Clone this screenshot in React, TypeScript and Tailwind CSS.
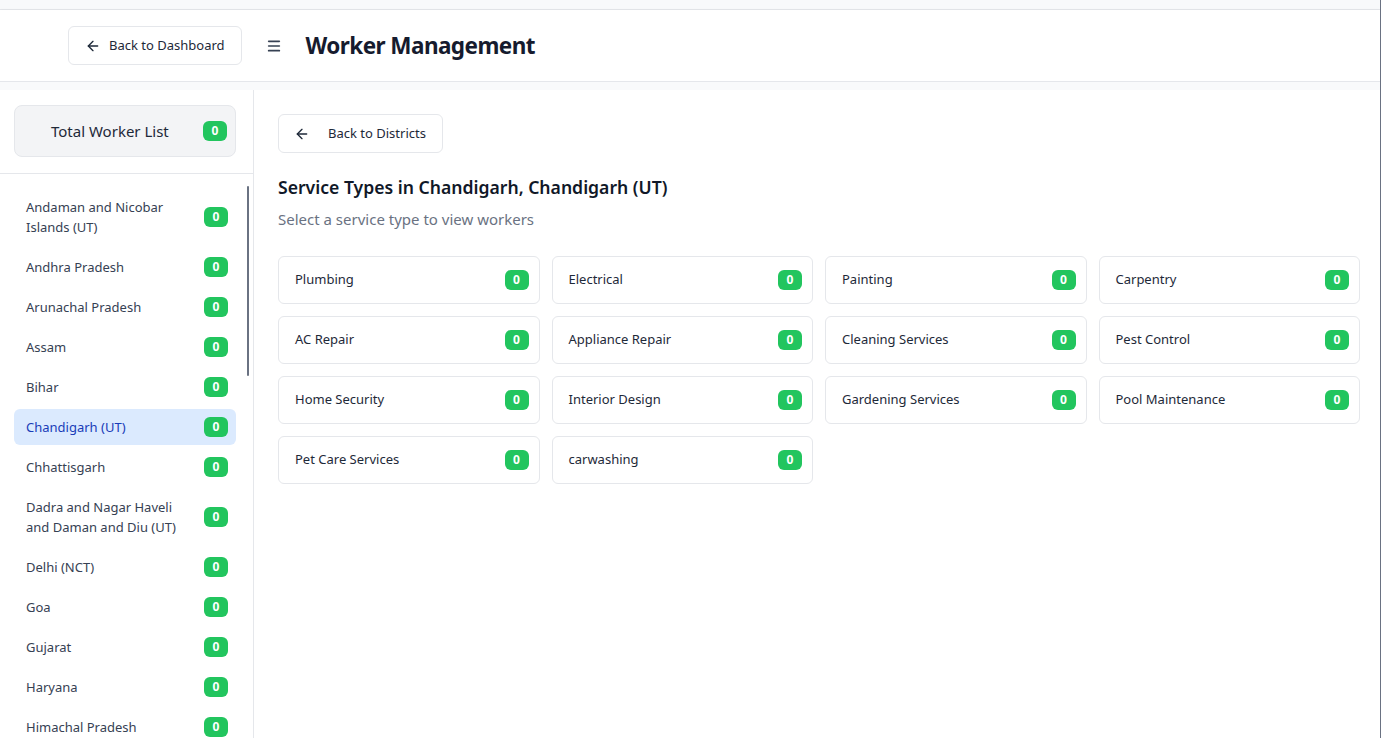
import React from 'react';
import { ArrowLeft, Menu } from 'lucide-react';

const states: { name: string; count: number }[] = [
  { name: 'Andaman and Nicobar Islands (UT)', count: 0 },
  { name: 'Andhra Pradesh', count: 0 },
  { name: 'Arunachal Pradesh', count: 0 },
  { name: 'Assam', count: 0 },
  { name: 'Bihar', count: 0 },
  { name: 'Chandigarh (UT)', count: 0 },
  { name: 'Chhattisgarh', count: 0 },
  { name: 'Dadra and Nagar Haveli and Daman and Diu (UT)', count: 0 },
  { name: 'Delhi (NCT)', count: 0 },
  { name: 'Goa', count: 0 },
  { name: 'Gujarat', count: 0 },
  { name: 'Haryana', count: 0 },
  { name: 'Himachal Pradesh', count: 0 },
];

const services = [
  'Plumbing',
  'Electrical',
  'Painting',
  'Carpentry',
  'AC Repair',
  'Appliance Repair',
  'Cleaning Services',
  'Pest Control',
  'Home Security',
  'Interior Design',
  'Gardening Services',
  'Pool Maintenance',
  'Pet Care Services',
  'carwashing',
];

function CountBadge({ value }: { value: number }) {
  return (
    <span className="inline-flex items-center justify-center h-5 min-w-6 px-2 rounded-md bg-[#22c55e] text-white text-xs font-bold">
      {value}
    </span>
  );
}

export default function App() {
  const selected = 'Chandigarh (UT)';

  return (
    <div
      className="h-[738px] overflow-hidden bg-white border-r border-gray-500 flex flex-col text-gray-800"
      style={{ fontFamily: '"Noto Sans", "Open Sans", sans-serif' }}
    >
      <div className="h-[10px] bg-[#f8f9fb] border-b border-gray-200 shrink-0" />

      <header className="h-[72px] shrink-0 bg-white border-b border-gray-200 shadow-sm flex items-center pl-[68px] gap-6">
        <button className="h-[39px] px-4 flex items-center gap-2 rounded-md border border-gray-200 bg-white text-[13px] text-gray-800">
          <ArrowLeft className="w-4 h-4" strokeWidth={2} />
          Back to Dashboard
        </button>
        <div className="flex items-center gap-6">
          <Menu className="w-4 h-4 text-gray-700" strokeWidth={2.5} />
          <h1 className="text-[22.5px] font-bold text-[#161b2e] tracking-tight">Worker Management</h1>
        </div>
      </header>

      <div className="h-2 bg-[#f9fafb] shrink-0" />

      <div className="flex flex-1 min-h-0">
        <aside className="w-[254px] shrink-0 border-r border-gray-200 flex flex-col">
          <div className="pl-[14px] pr-[17px] pt-[15px] pb-4 border-b border-gray-200">
            <div className="h-[52px] rounded-lg border border-gray-200 bg-gray-100 flex items-center justify-between pl-9 pr-2">
              <span className="text-[15px] text-gray-800">Total Worker List</span>
              <CountBadge value={0} />
            </div>
          </div>
          <div className="relative flex-1 min-h-0 overflow-hidden">
            <div className="absolute right-[4px] top-[12px] w-[2px] h-[190px] bg-gray-500 rounded" />
            <ul className="pl-[14px] pr-[17px] pt-[15px] flex flex-col gap-1">
              {states.map((s) => {
                const active = s.name === selected;
                return (
                  <li
                    key={s.name}
                    className={`min-h-9 flex items-center justify-between gap-3 pl-3 pr-2 py-2 rounded-md text-[13px] leading-5 ${
                      active ? 'bg-blue-100 text-blue-800' : 'text-gray-700'
                    }`}
                  >
                    <span className="max-w-[165px]">{s.name}</span>
                    <CountBadge value={s.count} />
                  </li>
                );
              })}
            </ul>
          </div>
        </aside>

        <main className="flex-1 min-w-0 pl-6 pr-5 pt-6">
          <button className="h-[39px] pl-[15px] pr-4 flex items-center gap-[18px] rounded-md border border-gray-200 bg-white text-[13px] text-gray-800">
            <ArrowLeft className="w-4 h-4" strokeWidth={2} />
            Back to Districts
          </button>
          <h2 className="mt-5 text-[17.6px] leading-7 font-semibold text-gray-900">
            Service Types in Chandigarh, Chandigarh (UT)
          </h2>
          <p className="mt-1.5 text-[15px] leading-6 text-gray-500">Select a service type to view workers</p>

          <div className="mt-[25px] grid grid-cols-4 gap-3">
            {services.map((name) => (
              <div
                key={name}
                className="h-12 rounded-md border border-gray-200 bg-white flex items-center justify-between pl-4 pr-2.5"
              >
                <span className="text-[13px] text-gray-800">{name}</span>
                <CountBadge value={0} />
              </div>
            ))}
          </div>
        </main>
      </div>
    </div>
  );
}
